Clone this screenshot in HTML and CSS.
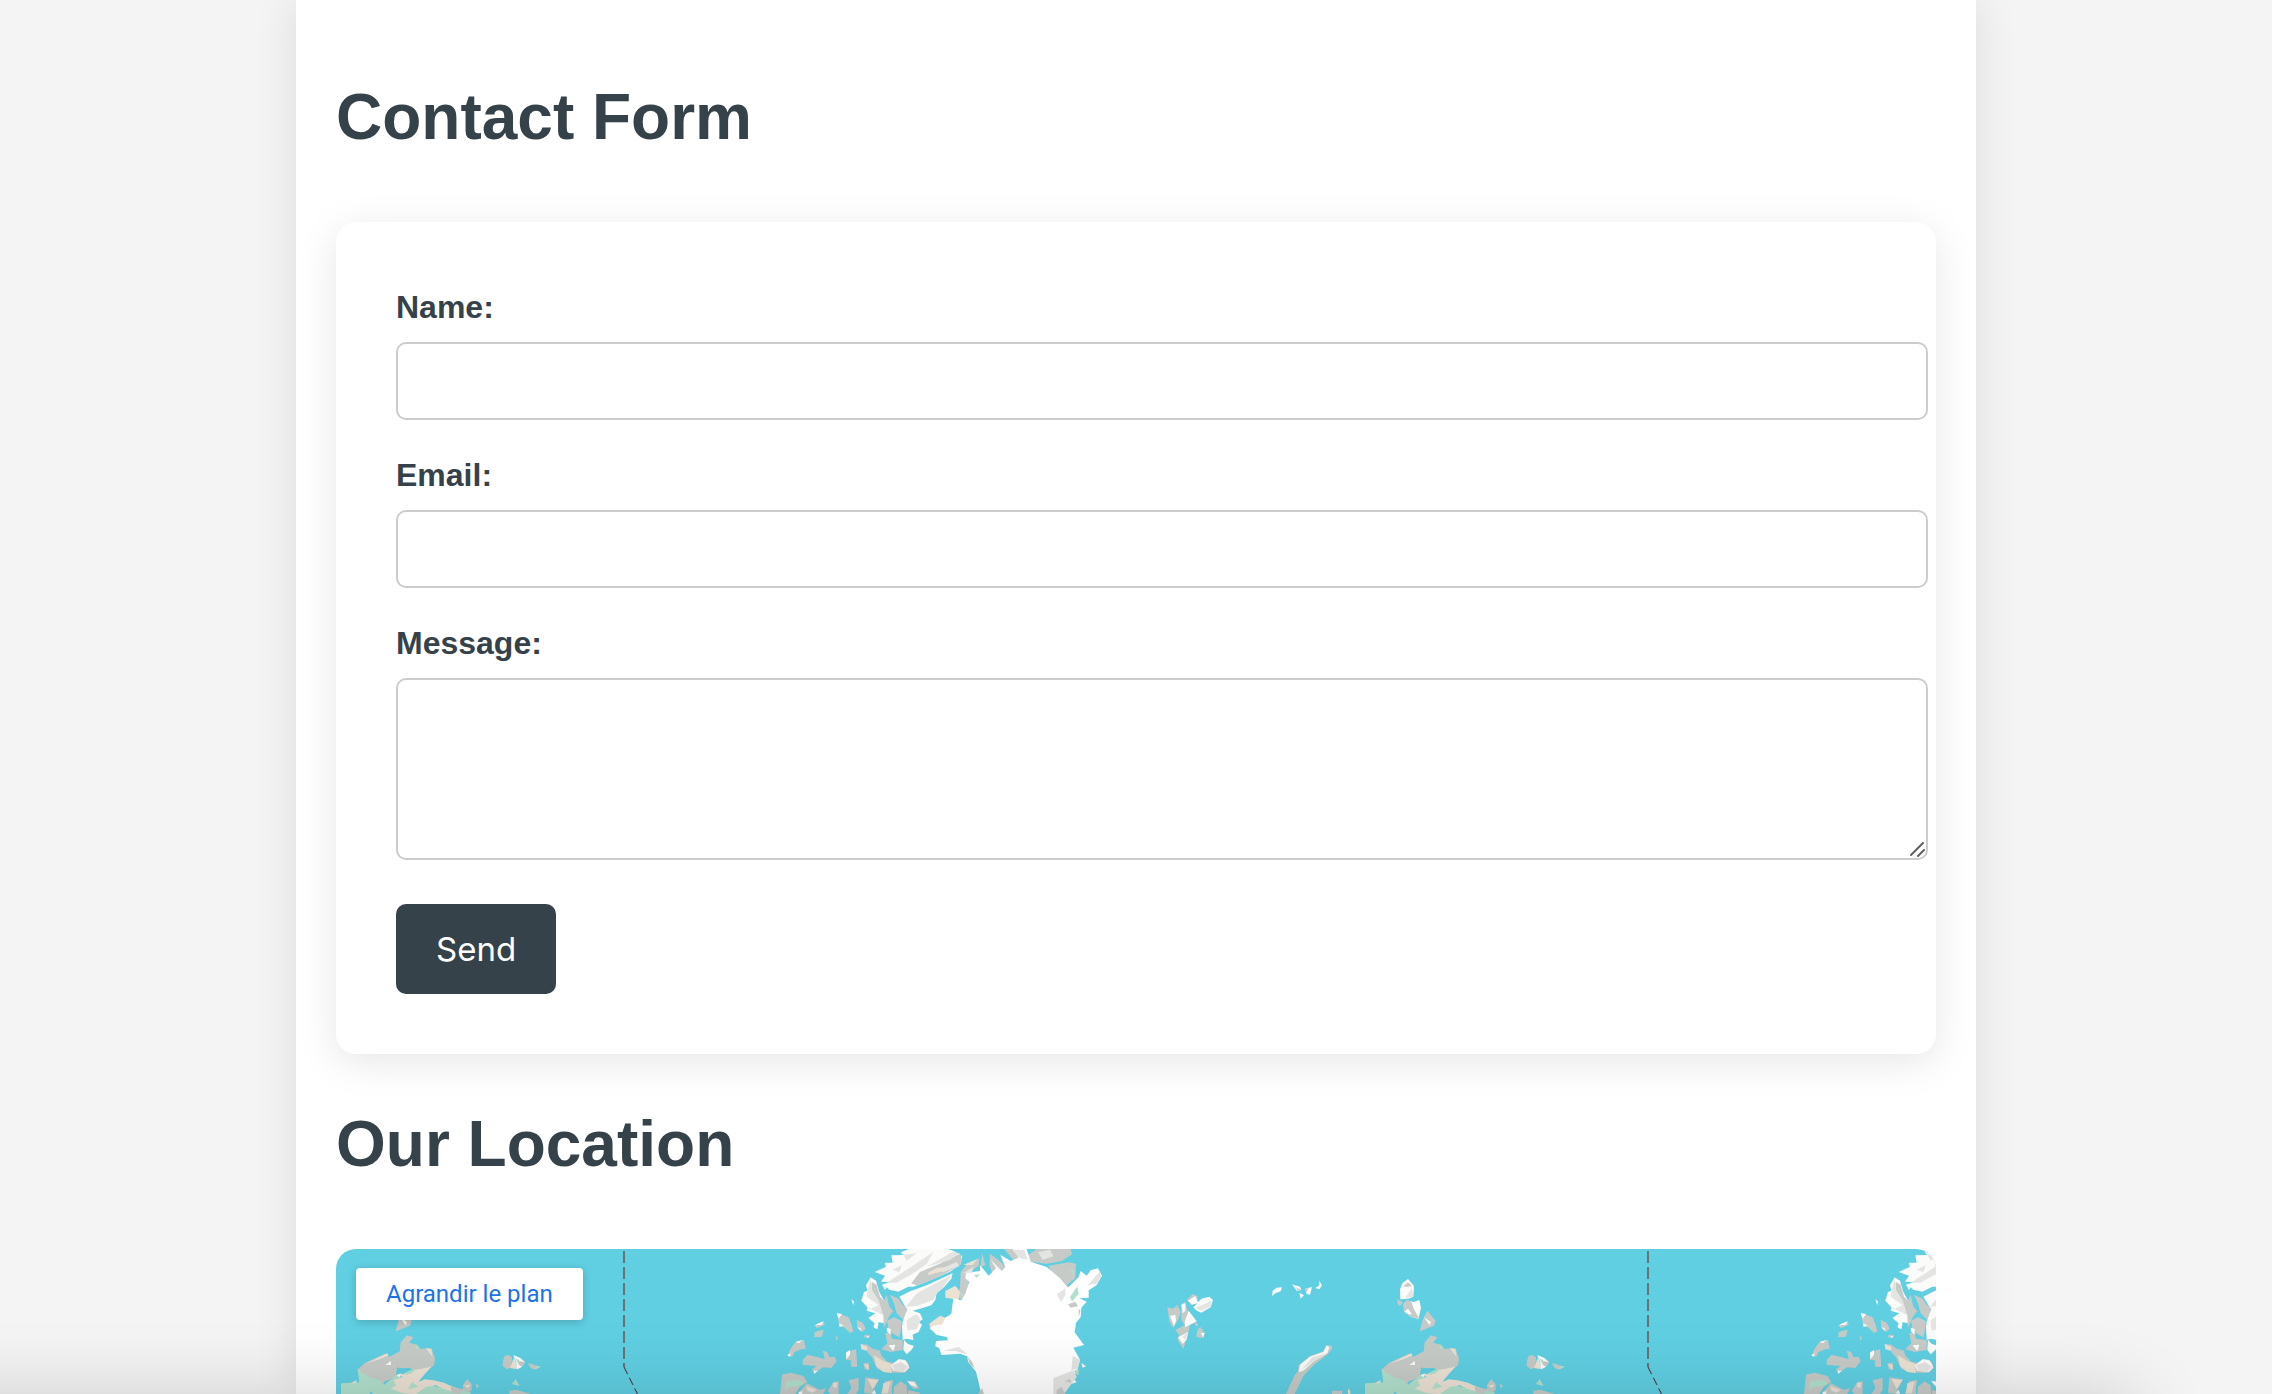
FILE: index.html
```html
<!DOCTYPE html>
<html lang="en">
<head>
<meta charset="utf-8">
<meta name="viewport" content="width=device-width, initial-scale=1">
<title>Contact</title>
<link rel="stylesheet" href="styles.css">
</head>
<body>
<main class="page">
  <h2 class="heading">Contact Form</h2>
  <form class="card">
    <label class="label" for="name">Name:</label>
    <input class="field" type="text" id="name" name="name">
    <label class="label" for="email">Email:</label>
    <input class="field" type="email" id="email" name="email">
    <label class="label" for="message">Message:</label>
    <div class="message">
      <textarea class="field area" id="message" name="message"></textarea>
      <svg class="grip" viewBox="0 0 16 16" aria-hidden="true"><path d="M1 14 13 2M8 15l6-6"/></svg>
    </div>
    <button class="send" type="submit">Send</button>
  </form>

  <h2 class="heading">Our Location</h2>
  <section class="map" id="map" aria-label="Map">
    <svg class="world" viewBox="0 0 1600 145" preserveAspectRatio="xMinYMin slice" aria-hidden="true">
      <defs>
        <g id="tile">
          <!-- date line -->
          <path class="border" d="M288 2V118"/>
          <path class="border-dark" d="M288 118l14 28"/>

          <!-- Severnaya Zemlya, Taymyr and the New Siberian Islands -->
          <g transform="translate(-20 -9) scale(.33333)">
            <path class="snow" d="M204 117 222 138 220 170 205 176 181 178 180 148 188 128Z"/>
            <path class="rock" d="M190 139 204 127 216 138 198 141Z"/>
            <path class="shade" d="M195 175 216 144 219 170Z"/>
            <path class="rock" d="M172 178 189 187 180 198 173 192Z"/>
            <path class="snow" d="M200 182 222 186 238 180 243 204 235 237 212 230 192 214 191 192Z"/>
            <path class="rock" d="M201 180 213 184 223 210 238 236 212 230 193 216 190 196Z"/>
            <path class="snow" d="M194 215 204 206 216 223 206 223Z"/>
            <path class="rock" d="M262 212 287 243 282 257 239 274 248 240Z"/>
            <path class="snow" d="M252 232 273 246 269 256Z"/>
            <path class="rock" d="M273 286 292 292 279 308 303 314 313 326 346 325 357 353 355 374 320 405 300 412 284 385 246 384 240 410 207 424 200 434 190 420 160 414 123 390 148 368 210 340 219 351 251 334 254 307Z"/>
            <path class="green" d="M125 388 160 412 190 420 204 434 240 405 290 420 330 425 360 440 400 436 435 448 462 455 466 470 75 470 75 430 130 427Z"/>
            <path class="sand" d="M284 392 346 380 318 412 304 430 325 418 352 421 384 428 404 438 408 455 385 448 360 436 330 440 300 462 262 460 224 446 240 436 232 420 262 412 242 402Z"/>
            <path class="green" d="M298 314 311 322 300 328ZM278 392 298 388 288 400 262 406ZM288 426 308 440 276 448Z"/>
            <path class="sand" d="M330 325 346 327 349 350 343 343ZM146 372 214 340 218 346 190 358ZM104 430 122 420 120 430Z"/>
            <path class="sea" d="M244 380 254 391 278 383 284 390 262 402 240 403ZM160 462 166 454 170 462Z"/>
            <path class="snow" d="M208 374 225 363 225 375ZM242 406 255 400 250 412Z"/>
            <path class="rock" d="M404 440 440 448 442 432 454 418 467 433 467 450 455 458 440 450 430 462 408 458ZM478 430 489 438 483 446ZM580 452 600 449 645 462 580 462ZM564 350 575 344 588 352 586 382 572 388 559 376Z"/>
            <path class="sand" d="M582 384 594 352 606 388ZM444 436 464 434 455 445Z"/>
            <path class="snow" d="M592 345 612 353 627 366 616 382 604 388 600 366Z"/>
            <path class="rock" d="M604 362 627 366 618 380 608 374ZM636 369 674 380 656 389 644 384Z"/>
            <path class="green" d="M598 356 610 360 606 368ZM654 379 675 380 660 388ZM599 417 611 438 588 432Z"/>
          </g>

          <!-- Canadian Arctic -->
          <g transform="translate(434 -9) scale(.33333)">
            <path class="snow" d="M314 96 348 80 344 68 368 68 364 46 400 45 392 37 418 27 535 27 552 34 576 48 572 72 540 95 470 125 430 140 415 140 385 155 358 149 350 142 345 150 336 134 362 126 333 125 345 107Z"/>
            <path class="shade" d="M350 128 440 70 490 36 470 72 430 100 380 128ZM400 45 440 40 410 62ZM368 90 396 74 388 96Z"/>
            <path class="rock" d="M424 130 450 96 516 68 540 40 574 46 572 74 530 98 470 126 440 136Z"/>
            <path class="shade" d="M470 80 548 36 570 40 540 60ZM500 92 560 66 568 78 520 96Z"/>
            <path class="sand" d="M474 98 500 84 526 82 520 92 476 106Z"/>
            <path class="snow" d="M388 170 420 154 470 136 548 100 544 116 522 142 500 160 496 180 484 196 450 206 428 212 450 220 458 238 446 246 456 254 446 276 428 284 430 300 410 296 398 300 396 260 402 222 412 210Z"/>
            <path class="shade" d="M408 200 440 160 546 104 520 142 500 160 490 180 440 198ZM410 240 440 222 452 240 440 268 412 272Z"/>
            <path class="rock" d="M360 165 386 176 398 194 412 206 400 240 380 220 372 190Z"/>
            <path class="snow" d="M302 112 318 122 328 156 346 190 356 222 345 240 340 250 326 246 322 268 310 262 314 250 295 234 316 220 290 212 292 202 274 182 282 156 292 152 288 136Z"/>
            <path class="shade" d="M300 118 330 180 340 226 300 206 326 196 290 170Z"/>
            <path class="rock" d="M306 126 320 134 330 170 342 182 350 164 358 200 370 214 358 228 350 246 342 264 340 226 326 180 306 150ZM352 242 372 232 396 244 392 272 388 292 374 284 356 272ZM346 280 362 278 366 296 398 300 398 330 362 336 334 328 352 310Z"/>
            <path class="snow" d="M356 316 376 314 370 334ZM402 300 414 312 432 318 424 330 410 343 400 330ZM350 264 362 266 362 284 352 276Z"/>
            <path class="rock" d="M200 218 236 232 244 252 250 274 240 279 222 262 208 256ZM260 240 278 248 287 266 276 276 262 264ZM134 256 160 244 164 254 140 264ZM134 276 161 269 156 290 133 292ZM196 284 204 294 200 302ZM284 284 300 286 294 294 282 292ZM78 304 102 300 107 326 94 328 74 336 66 350 52 348 62 326ZM98 360 112 344 138 350 165 358 158 332 172 336 178 352 194 350 200 364 184 384 160 382 132 400 126 388 140 378 98 374ZM228 336 258 328 262 380 244 381 242 360 228 360ZM280 370 296 368 298 390 284 388Z"/>
            <path class="snow" d="M200 220 216 222 206 236ZM208 250 222 258 208 260ZM134 256 160 244 156 254ZM262 262 272 264 274 274ZM78 306 98 300 86 310ZM52 346 62 340 60 350ZM132 392 144 392 132 402ZM228 338 240 330 240 344 229 358ZM244 178 252 184 250 196ZM288 290 298 288 296 293Z"/>
            <path class="rock" d="M272 312 292 314 308 326 330 332 333 345 352 366 375 370 388 356 414 366 418 386 404 398 350 398 322 386 306 352Z"/>
            <path class="sand" d="M272 312 292 320 290 332 274 328ZM312 346 338 362 362 370 366 398 340 396 318 378ZM282 372 296 376 294 390Z"/>
            <path class="snow" d="M362 376 386 358 406 360 418 382 404 396 370 392Z"/>
            <path class="shade" d="M366 376 392 366 414 380 400 396 374 392Z"/>
            <path class="rock" d="M36 404 62 398 100 408 112 426 90 440 76 462 30 462ZM86 458 110 430 132 440 150 450 168 444 160 462 86 462ZM190 426 206 424 206 462 180 462 174 452ZM236 420 266 414 266 450 258 462 232 462 244 444ZM286 412 326 418 318 436 304 462 282 458ZM346 424 370 420 366 440 366 462 332 462ZM372 440 392 424 410 436 412 462 370 462ZM410 422 436 424 448 446 430 446ZM414 450 450 458 450 462 414 462Z"/>
            <path class="green" d="M50 424 92 420 102 432 76 440 60 440 44 452Z"/>
            <path class="sand" d="M110 438 140 450 126 458 110 450ZM190 428 202 428 200 444 188 440ZM292 416 326 420 308 446ZM340 430 362 424 354 460 336 460Z"/>
            <path class="snow" d="M412 424 432 426 442 442 422 436ZM86 456 98 454 96 462 86 462ZM304 460 314 450 318 462Z"/>
          </g>

          <!-- Greenland -->
          <g transform="translate(544 -4) scale(.33333)">
            <path class="rock" d="M242 82 262 56 298 40 296 62 270 80 262 140 246 168 232 150 240 128ZM306 24 316 60 302 66ZM330 26 362 50 382 78 380 100 340 92 328 60ZM358 24 382 60 374 66ZM372 12 398 12 420 40 410 56ZM444 30 470 12 572 12 576 28 546 48 500 56 450 50ZM506 62 566 52 588 56 586 100 560 120 590 140 604 190 596 220 580 200 560 170 530 120Z"/>
            <path class="sand" d="M196 138 226 122 240 140 236 164 196 158ZM148 236 180 212 202 220 190 240 160 246 152 256ZM250 60 292 42 278 60ZM312 100 336 92 332 104Z"/>
            <path class="ice" d="M220 160 244 166 256 146 268 110 256 100 258 84 300 78 300 60 326 92 348 70 332 44 366 78 376 66 362 30 392 48 416 38 398 12 440 12 452 50 500 66 540 100 564 128 596 96 602 78 620 92 632 76 654 70 666 92 650 120 626 136 626 158 598 160 620 170 604 188 602 216 588 234 584 262 612 300 580 308 600 344 592 376 576 396 590 412 570 418 552 447 304 447 288 380 264 350 262 334 240 326 184 330 178 310 166 304 168 288 204 286 200 276 170 270 150 250 160 242 188 238 196 218 214 206Z"/>
            <path class="shade" d="M396 14 420 40 444 44 432 14ZM336 48 364 78 350 66ZM530 148 556 130 556 150 544 172ZM624 120 660 78 664 94 650 116ZM190 318 236 306 262 328 226 318ZM520 400 580 376 590 396 572 420 552 447 520 447ZM578 332 600 344 594 370 574 376Z"/>
            <path class="rock" d="M450 40 480 20 500 38 540 20 530 44 490 54 470 50ZM546 96 578 88 572 112 552 110ZM564 178 586 170 594 184 572 188ZM596 192 602 196 596 216ZM554 408 570 402 574 414ZM294 447 306 430 312 447ZM264 336 276 350 284 370 268 356ZM530 436 544 426 556 447 530 447Z"/>
            <path class="shade" d="M474 22 510 14 520 34 488 44ZM250 84 280 66 276 84Z"/>
            <path class="green" d="M282 90 300 88 290 98ZM570 78 584 74 580 90ZM240 138 250 146 246 162ZM570 156 592 124 596 146 576 170ZM584 376 596 372 596 390 584 388Z"/>
            <path class="snow" d="M604 354 618 364 608 368Z"/>
          </g>

          <!-- Svalbard, Franz Josef Land, Novaya Zemlya -->
          <g transform="translate(794 -9) scale(.33333)">
            <path class="rock" d="M170 180 188 162 202 168 204 190 184 194ZM112 202 130 206 142 194 152 216 146 236 130 264 118 244ZM154 192 166 186 172 210 200 246 180 254 172 290 160 327 142 298 148 286 136 270 164 256 154 240ZM198 290 204 266 212 262 224 280 220 295ZM192 250 204 250 202 262Z"/>
            <path class="snow" d="M174 182 196 168 204 188 186 194ZM190 202 214 176 238 170 249 180 242 202 214 218 200 212ZM120 228 136 224 138 242 132 258ZM154 194 166 190 166 212 158 220ZM176 212 200 244 166 262 164 246ZM144 292 174 276 170 298 158 312ZM212 280 224 278 220 292Z"/>
            <path class="shade" d="M196 204 246 182 240 200 214 212ZM158 290 172 278 166 300Z"/>
            <path class="snow" d="M426 168 428 152 440 143 456 142 452 154 436 160ZM486 133 510 140 514 150 500 152ZM508 158 522 166 512 176ZM526 146 546 141 540 164 530 162ZM556 144 568 136 568 122 576 136 568 148Z"/>
            <path class="rock" d="M526 146 536 144 530 156ZM498 142 514 150 502 150ZM468 462 494 406 504 394 506 376 540 348 580 334 588 318 604 316 606 326 594 342 552 374 520 408 494 462Z"/>
            <path class="snow" d="M506 396 510 374 540 350 580 336 590 316 598 322 592 340 552 364 520 392Z"/>
            <path class="shade" d="M514 390 548 352 588 340 548 366Z"/>
            <path class="rock" d="M606 452 638 452 636 462 606 462Z"/>
            <path class="sand" d="M654 444 662 456 660 462 654 462Z"/>
          </g>
        </g>
      </defs>
      <use href="#tile"/>
      <use href="#tile" x="1024"/>
    </svg>
    <a class="enlarge" href="#map">Agrandir le plan</a>
  </section>
</main>
</body>
</html>
```
FILE: styles.css
```css
body {
  margin: 0;
  background: #f4f4f4;
  color: #36424a;
  font-family: "Liberation Sans", Arial, sans-serif;
  font-size: 32px;
}

/* soft shade rising from below the fold */
body::after {
  content: "";
  position: fixed;
  top: 100%;
  left: -200px;
  right: 136px;
  height: 400px;
  box-shadow: 0 0 70px rgba(0, 0, 0, 0.16);
  pointer-events: none;
}

.page {
  display: flex;
  flex-direction: column;
  box-sizing: border-box;
  max-width: 1680px;
  min-height: 100vh;
  margin: 0 auto;
  padding: 27px 40px 0;
  background: #fff;
  box-shadow: 0 0 40px rgba(0, 0, 0, 0.1);
}

.heading {
  margin: 39px 0 54px;
  font-size: 64px;
  line-height: 102px;
}

.card {
  padding: 60px;
  border-radius: 20px;
  background: #fff;
  box-shadow: 0 8px 40px rgba(0, 0, 0, 0.1);
}

.label {
  display: block;
  margin-bottom: 10px;
  font-weight: bold;
  line-height: 50px;
}

.field {
  display: block;
  width: 100%;
  height: 26px;
  margin: 0 0 30px;
  padding: 24px;
  border: 2px solid #ccc;
  border-radius: 10px;
  background: #fff;
  color: inherit;
  font: 26px/26px "Liberation Sans", Arial, sans-serif;
  box-sizing: content-box;
}

.message {
  position: relative;
  margin-bottom: 44px;
}

.area {
  height: 130px;
  margin: 0;
  resize: none;
}

.grip {
  position: absolute;
  right: -50px;
  bottom: 3px;
  width: 16px;
  height: 16px;
  fill: none;
  stroke: #606060;
  stroke-width: 2;
  stroke-linecap: round;
}

.send {
  display: block;
  height: 90px;
  padding: 0 40px;
  border: 0;
  border-radius: 10px;
  background: #36424a;
  color: #fff;
  font: 33px Inter, sans-serif;
}

.map {
  position: relative;
  flex: 1;
  min-height: 145px;
  overflow: hidden;
  border-radius: 20px 20px 0 0;
  background: #60cfe2;
}

.world {
  position: absolute;
  inset: 0;
  width: 100%;
  height: 100%;
}

.enlarge {
  position: absolute;
  top: 19px;
  left: 20px;
  padding: 0 30px;
  border-radius: 4px;
  background: #fff;
  box-shadow: 0 2px 8px rgba(0, 0, 0, 0.2);
  color: #1a73e8;
  font: 24px/52px Roboto, sans-serif;
  text-decoration: none;
}

.ice { fill: #fff; }
.snow { fill: #fbfbfa; }
.shade { fill: #e4e4e3; }
.rock { fill: #c7cbc8; }
.green { fill: #b2e0cd; }
.sand { fill: #ebe2d4; }
.sea { fill: #60cfe2; }

.border,
.border-dark {
  fill: none;
  stroke: #6c7079;
  stroke-width: 2;
  stroke-dasharray: 12 4;
}

.border-dark {
  stroke: #58242c;
  stroke-width: 1;
  stroke-dasharray: 8 4;
}
```
